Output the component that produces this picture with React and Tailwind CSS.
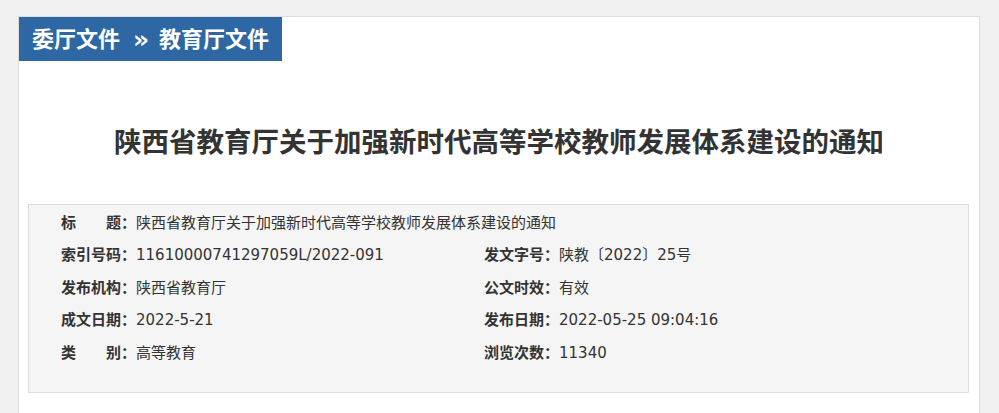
import React from 'react'

const FONT = { fontFamily: '"DejaVu Sans", "Noto Sans CJK SC", sans-serif' }

const rows = [
  [{ label: '标　　题：', value: '陕西省教育厅关于加强新时代高等学校教师发展体系建设的通知', full: true }],
  [
    { label: '索引号码：', value: '11610000741297059L/2022-091' },
    { label: '发文字号：', value: '陕教〔2022〕25号' },
  ],
  [
    { label: '发布机构：', value: '陕西省教育厅' },
    { label: '公文时效：', value: '有效' },
  ],
  [
    { label: '成文日期：', value: '2022-5-21' },
    { label: '发布日期：', value: '2022-05-25 09:04:16' },
  ],
  [
    { label: '类　　别：', value: '高等教育' },
    { label: '浏览次数：', value: '11340' },
  ],
]

function Field({ label, value }) {
  return (
    <div className="flex whitespace-nowrap">
      <span className="font-bold text-[#333]">{label}</span>
      <span className="text-[#333]">{value}</span>
    </div>
  )
}

export default function App() {
  return (
    <div className="min-h-[413px] bg-[#f1f1f1] pt-[16px] overflow-hidden" style={FONT}>
      <div className="ml-[18px] w-[962px] bg-white border border-[#dddddd] pb-[40px]">
        {/* 栏目标题 */}
        <div className="inline-flex items-center h-[44px] bg-[#2d67a4] px-[13px] text-[22px] font-bold text-white whitespace-nowrap">
          <span>委厅文件</span>
          <span className="mx-[13px] w-[13px] text-center text-[25px] leading-none">»</span>
          <span>教育厅文件</span>
        </div>

        {/* 文章标题 */}
        <h1 className="mt-[61px] text-center text-[27.5px] leading-[40px] font-bold text-[#333]">
          陕西省教育厅关于加强新时代高等学校教师发展体系建设的通知
        </h1>

        {/* 信息表 */}
        <div className="mt-[42px] ml-[9px] mr-[10px] bg-[#f5f5f5] border border-[#dddddd] pt-[2px] pb-[23px] pl-[32px] text-[15px]">
          {rows.map((row, i) => (
            <div key={i} className="flex h-[32.4px] items-center">
              {row.map((f, j) => (
                <div key={j} className={f.full ? '' : j === 0 ? 'w-[423px]' : ''}>
                  <Field label={f.label} value={f.value} />
                </div>
              ))}
            </div>
          ))}
        </div>
      </div>
    </div>
  )
}
